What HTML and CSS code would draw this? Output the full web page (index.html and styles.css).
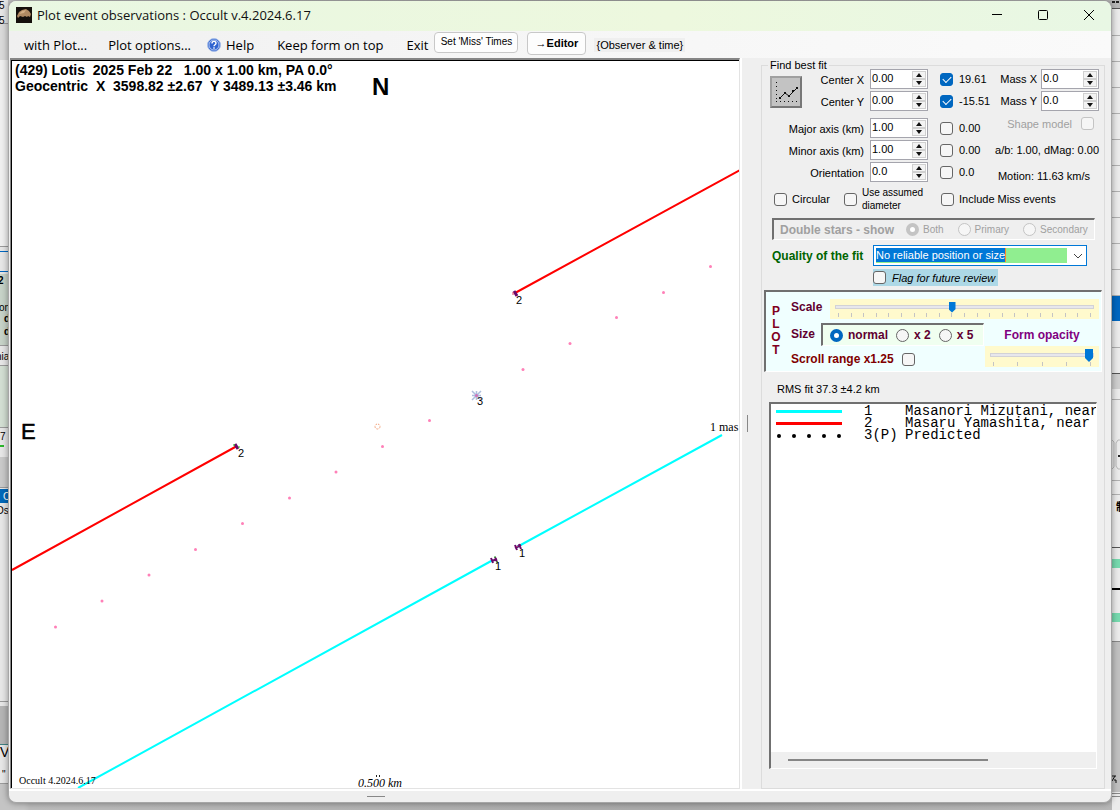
FILE: index.html
```html
<!DOCTYPE html>
<html lang="en">
<head>
<meta charset="utf-8">
<title>Plot event observations</title>
<link rel="stylesheet" href="styles.css">
</head>
<body>
<div class="desktop">
  <svg class="sliver sliver-left" width="8" height="810" viewBox="0 0 8 810" aria-hidden="true">
    <rect width="8" height="810" fill="#e6e6e6"/>
    <rect y="24" width="8" height="36" fill="#d9d9d9"/>
    <rect y="60" width="8" height="186" fill="#efefef"/>
    <path d="M0 23.500h8M0 246.500h8M0 345.500h8M0 365.500h8M0 427.500h8M0 487.500h8M0 701.500h8M0 783.500h8" stroke="#9a9a9a"/>
    <path d="M0 251.500h8M0 271.500h8" stroke="#0067c0"/>
    <rect y="274" width="8" height="71" fill="#c6d2c7"/>
    <rect y="366" width="8" height="61" fill="#d2ded2"/>
    <path d="M0 446h4" stroke="#2bb52b" stroke-width="2"/>
    <rect y="457" width="8" height="30" fill="#c9c9c9"/>
    <rect y="489" width="8" height="14" fill="#0067b8"/>
    <rect y="706" width="8" height="38" fill="#b4b4b4"/>
    <path d="M0 744.500h8" stroke="#3f8080"/>
    <rect y="784" width="8" height="26" fill="#c4c4c4"/>
    <g font-size="10">
      <text x="-1" y="9">5</text><text x="-1" y="24">5</text>
      <text x="-2" y="284" font-weight="bold">2</text>
      <text x="-1" y="311">on</text>
      <text x="4" y="322" font-weight="bold">d</text><text x="4" y="335" font-weight="bold">d</text>
      <text x="-4" y="360">nia</text><text x="0" y="440">7</text>
      <text x="3" y="500" fill="#fff">C</text><text x="-4" y="514">Os</text>
      <text x="0" y="757" font-size="14">V</text><text x="2" y="778">"</text>
    </g>
  </svg>
  <svg class="sliver sliver-right" width="8" height="810" viewBox="0 0 8 810" aria-hidden="true">
    <rect width="8" height="810" fill="#ebebeb"/>
    <rect width="8" height="8" fill="#b9b9b9"/>
    <path d="M0 2h8" stroke="#222" stroke-width="2" stroke-dasharray="3 1"/>
    <path d="M0 8.500h8M0 373.500h8M0 547.500h8" stroke="#555"/>
    <path d="M0 35.500h8M0 61.500h8M0 87.500h8M0 113.500h8M0 139.500h8M0 165.500h8M0 191.500h8M0 217.500h8M0 243.500h8M0 269.500h8M0 295.500h8M0 347.500h8M0 399.500h8M0 480.500h8M0 494.500h8" stroke="#b0b0b0"/>
    <rect y="296" width="8" height="25" fill="#0067c0"/>
    <rect y="374" width="8" height="15" fill="#cfcfcf"/>
    <path d="M8 440h-2l-2 3v23l2 3h2M0 440l2 2v25l-2 2" fill="none" stroke="#b8b8b8"/>
    <path d="M6 456h2" stroke="#222" stroke-width="2"/>
    <text x="4" y="511" font-size="11" font-weight="bold">制</text>
    <rect y="559" width="8" height="9" fill="#76d9ae"/>
    <path d="M0 589h8" stroke="#000" stroke-width="2"/>
    <rect y="613" width="8" height="9" fill="#76d9ae"/>
    <rect y="641" width="8" height="151" fill="#c0c0c0"/>
    <path d="M0 641.500h8M0 793.500h8M0 796.500h8" stroke="#888"/>
    <path d="M0 781l3-5M0 776h4M2 780h2v3" stroke="#111" fill="none"/>
  </svg>

  <main class="window">
    <header class="titlebar">
      <svg class="app-icon" width="16" height="16" viewBox="0 0 16 16" aria-hidden="true"><rect width="16" height="16" fill="#15100c"/><path d="M1 9l2-4 3-2 4-1 3 2 2 3-1 3-2-1-1 1-2-1-2 1-3-1-2 2z" fill="#b08a62"/><path d="M3 7l3-3 4-1-2 3z" fill="#d2ae84"/></svg>
      <h1 class="title">Plot event observations : Occult v.4.2024.6.17</h1>
      <button class="caption-btn" aria-label="Minimize"><svg width="12" height="12" viewBox="0 0 12 12"><path d="M1 5.500h10" stroke="#000"/></svg></button>
      <button class="caption-btn" aria-label="Maximize"><svg width="12" height="12" viewBox="0 0 12 12"><rect x="1.500" y="1.500" width="9" height="9" rx="1" fill="none" stroke="#000"/></svg></button>
      <button class="caption-btn" aria-label="Close"><svg width="12" height="12" viewBox="0 0 12 12"><path d="M1 1l10 10M11 1L1 11" stroke="#000" fill="none"/></svg></button>
    </header>

    <nav class="menubar">
      <button class="menu">with Plot...</button>
      <button class="menu">Plot options...</button>
      <button class="menu menu-help"><svg width="14" height="14" viewBox="0 0 14 14" aria-hidden="true"><circle cx="7" cy="7" r="6.500" fill="#2f63d0" stroke="#a9bfe8"/><circle cx="7" cy="7" r="5" fill="none" stroke="#e6eefc" stroke-width=".7"/><path d="M5 5.500c0-3 4-2.700 4-.3C9 6.700 7 6.700 7 8.300M7 9.300v1.500" stroke="#fff" stroke-width="1.400" fill="none"/></svg>Help</button>
      <button class="menu menu-late">Keep form on top</button>
      <button class="menu">Exit</button>
      <button class="tool tool-miss">Set 'Miss' Times</button>
      <button class="tool tool-editor">→Editor</button>
      <button class="observer">{Observer &amp; time}</button>
    </nav>

    <div class="content">
      <section class="plot">
        <svg class="plot-canvas" viewBox="0 0 727 727" role="img" aria-label="Event chords">
          <g class="plot-heading">
            <text x="3" y="14">(429) Lotis  2025 Feb 22   1.00 x 1.00 km, PA 0.0°</text>
            <text x="3" y="30">Geocentric  X  3598.82 ±2.67  Y 3489.13 ±3.46 km</text>
          </g>
          <text class="north" x="360" y="34">N</text>
          <text class="east" x="9" y="378">E</text>
          <g class="chord red"><path d="M503 232L728 109M0 509L225 385"/></g>
          <g class="chord cyan"><path d="M505 486L710 374M481 499L66 727"/></g>
          <g class="path-dots">
            <circle cx="698.500" cy="205.500" r="1.500"/><circle cx="651.500" cy="231.500" r="1.500"/><circle cx="604.500" cy="256.500" r="1.500"/><circle cx="558" cy="282.500" r="1.500"/><circle cx="511" cy="308.500" r="1.500"/><circle cx="417.500" cy="359.500" r="1.500"/><circle cx="370.500" cy="385.500" r="1.500"/><circle cx="324" cy="411" r="1.500"/><circle cx="277.500" cy="437" r="1.500"/><circle cx="230.500" cy="462.500" r="1.500"/><circle cx="183.500" cy="488.500" r="1.500"/><circle cx="137" cy="514" r="1.500"/><circle cx="90" cy="540" r="1.500"/><circle cx="43.500" cy="566" r="1.500"/>
          </g>
          <path d="M460 330l9 9M469 330l-9 9M464.500 330v9M460 334.500h9" stroke="#9aaed6" stroke-width="1.500" opacity=".8"/>
          <circle cx="464.500" cy="334.500" r="1.500" fill="#d070b8"/>
          <circle cx="365.500" cy="365.500" r="2.500" fill="none" stroke="#f4a27a" stroke-dasharray="2 1"/>
          <g class="ends">
            <path d="M502 230l3 5M223 383l3 5" stroke-width="3"/>
            <path d="M501 231v3" stroke="#e04060"/>
            <path d="M222 383v2M227 385v2" stroke="#20c020"/>
            <path d="M503 484l2 5M507 483l2 5M503 487l6-3M479 497l2 5M483 496l2 5M480 500l5-2" stroke-width="2"/>
            <path d="M505 485v1" stroke="#f06080"/><path d="M482 496h2M484 501h2" stroke="#20b020"/>
          </g>
          <g class="point-label">
            <text x="504" y="243">2</text><text x="226" y="396">2</text><text x="465" y="344">3</text><text x="507" y="496">1</text><text x="483" y="509">1</text>
          </g>
          <g class="serif">
            <text x="698" y="370" font-size="12">1 mas</text>
            <text x="7" y="723" font-size="10">Occult 4.2024.6.17</text>
            <text x="346" y="726" font-size="12" font-style="italic">0.500 km</text>
          </g>
          <path d="M364.500 714v2M367.500 714v2" stroke="#222"/>
        </svg>
      </section>
      <div class="splitter"><span class="grip"></span></div>

      <fieldset class="fit">
        <legend>Find best fit</legend>
        <div class="params">
          <button class="chart-btn" aria-label="Fit"><svg width="24" height="24" viewBox="0 0 24 24"><path d="M2.500 2v19M2 21.500h22" stroke="#111" stroke-dasharray="1 3" fill="none"/><path d="M6 18l5-5 4 3 8-8" stroke="#111" fill="none"/><path d="M5 17h2v2H5zM10 12h2v2h-2zM14 15h2v2h-2zM18 10h2v2h-2zM22 7h2v2h-2z" fill="#111"/></svg></button>

          <label class="name" for="cx">Center X</label>
          <span class="spin"><input id="cx" value="0.00"><span class="updown"><button class="up" aria-label="Up"></button><button class="down" aria-label="Down"></button></span></span>
          <label class="tick"><input type="checkbox" checked>19.61</label>
          <div class="mass"><label for="mx">Mass X</label><span class="spin"><input id="mx" value="0.0"><span class="updown"><button class="up" aria-label="Up"></button><button class="down" aria-label="Down"></button></span></span></div>

          <label class="name" for="cy">Center Y</label>
          <span class="spin"><input id="cy" value="0.00"><span class="updown"><button class="up" aria-label="Up"></button><button class="down" aria-label="Down"></button></span></span>
          <label class="tick"><input type="checkbox" checked>-15.51</label>
          <div class="mass"><label for="my">Mass Y</label><span class="spin"><input id="my" value="0.0"><span class="updown"><button class="up" aria-label="Up"></button><button class="down" aria-label="Down"></button></span></span></div>
        </div>
        <div class="params params-axes">
          <label class="name wide" for="maj">Major axis (km)</label>
          <span class="spin"><input id="maj" value="1.00"><span class="updown"><button class="up" aria-label="Up"></button><button class="down" aria-label="Down"></button></span></span>
          <label class="tick"><input type="checkbox">0.00</label>
          <div class="facts">
            <label class="shape">Shape model<input type="checkbox" disabled></label>
            <span>a/b: 1.00, dMag: 0.00</span>
            <span class="motion">Motion: 11.63 km/s</span>
          </div>
          <label class="name wide" for="min">Minor axis (km)</label>
          <span class="spin"><input id="min" value="1.00"><span class="updown"><button class="up" aria-label="Up"></button><button class="down" aria-label="Down"></button></span></span>
          <label class="tick"><input type="checkbox">0.00</label>
          <label class="name wide" for="ori">Orientation</label>
          <span class="spin"><input id="ori" value="0.0"><span class="updown"><button class="up" aria-label="Up"></button><button class="down" aria-label="Down"></button></span></span>
          <label class="tick"><input type="checkbox">0.0</label>
        </div>

        <div class="options">
          <label class="opt"><input type="checkbox">Circular</label>
          <label class="opt opt-two"><input type="checkbox"><span>Use assumed<br>diameter</span></label>
          <label class="opt"><input type="checkbox">Include Miss events</label>
        </div>

        <div class="double sunken">
          <strong>Double stars - show</strong>
          <label><input type="radio" name="dbl" checked disabled>Both</label>
          <label><input type="radio" name="dbl" disabled>Primary</label>
          <label><input type="radio" name="dbl" disabled>Secondary</label>
        </div>

        <div class="quality">
          <label class="quality-label" for="quality">Quality of the fit</label>
          <div class="combo">
            <select id="quality"><option>No reliable position or size</option></select>
            <svg class="chevron" width="10" height="6" viewBox="0 0 10 6" aria-hidden="true"><path d="M1 1l4 4 4-4" fill="none" stroke="#444"/></svg>
          </div>
          <label class="flag"><input type="checkbox">Flag for future review</label>
        </div>

        <div class="plot-opts sunken">
          <div class="vertical"><span>P</span><span>L</span><span>O</span><span>T</span></div>
          <div class="scale-row">
            <label for="scale">Scale</label>
            <div class="slider"><input id="scale" type="range" min="0" max="20" value="9"><div class="ticks"><i></i><i></i><i></i><i></i><i></i><i></i><i></i><i></i><i></i><i></i><i></i><i></i><i></i><i></i><i></i><i></i><i></i><i></i><i></i><i></i><i></i></div></div>
          </div>
          <div class="lower-left">
            <div class="size-row">
              <span>Size</span>
              <div class="sizes sunken">
                <label><input type="radio" name="size" checked>normal</label>
                <label><input type="radio" name="size">x 2</label>
                <label><input type="radio" name="size">x 5</label>
              </div>
            </div>
            <label class="scroll-row">Scroll range x1.25<input type="checkbox"></label>
          </div>
          <div class="lower-right">
            <label for="opacity">Form opacity</label>
            <div class="slider slider-opacity"><input id="opacity" type="range" min="0" max="4" value="4"><div class="ticks"><i></i><i></i><i></i><i></i><i></i></div></div>
          </div>
        </div>

        <p class="rms">RMS fit 37.3 ±4.2 km</p>

        <div class="list sunken">
          <ul class="rows">
            <li><svg width="66" height="12" viewBox="0 0 66 12"><path d="M0 6.500h66" stroke="#0ff" stroke-width="3"/></svg><span class="num">1</span><span>Masanori Mizutani, near</span></li>
            <li><svg width="66" height="12" viewBox="0 0 66 12"><path d="M0 6.500h66" stroke="#f00" stroke-width="3"/></svg><span class="num">2</span><span>Masaru Yamashita, near</span></li>
            <li><svg width="66" height="12" viewBox="0 0 66 12"><g fill="#000"><circle cx="3" cy="7" r="2"/><circle cx="18" cy="7" r="2"/><circle cx="33" cy="7" r="2"/><circle cx="48" cy="7" r="2"/><circle cx="63" cy="7" r="2"/></g></svg><span class="num">3(P)</span><span>Predicted</span></li>
          </ul>
          <div class="hscroll"><div class="hthumb"></div></div>
        </div>
      </fieldset>
    </div>
    <footer class="bottom"><span class="grip grip-h"></span></footer>
  </main>
</div>
</body>
</html>
```
FILE: styles.css
```css
* { box-sizing: border-box; }
body { margin: 0; font: 11px/14px "Liberation Sans", "Noto Sans CJK JP", sans-serif; color: #000; }
button, input, select { font: inherit; color: inherit; margin: 0; padding: 0; }
button { border: 0; background: none; }

.desktop {
  position: relative;
  display: flex;
  min-height: 100vh;
  padding: 1px 8px 8px;
  background: linear-gradient(90deg, #c4c4c4 0 24px, #bbb 30px, #aaa 60%, #b8b8b8);
}
.sliver { position: absolute; top: 0; overflow: hidden; }
.sliver-left { left: 0; }
.sliver-right { right: 0; }

.window {
  position: relative;
  flex: 1;
  display: flex;
  flex-direction: column;
  min-width: 0;
  border: 1px solid #a6a6a6;
  border-top: 0;
  border-radius: 8px;
  overflow: hidden;
  background: #efefef;
  box-shadow: 0 0 6px rgba(0, 0, 0, .4);
}

.titlebar {
  display: flex;
  align-items: center;
  height: 30px;
  padding: 0 0 2px 7px;
  background: linear-gradient(90deg, #e9f7e2, #edf8de 60%, #e8f7e4);
}
.title { flex: 1; margin: 0 0 0 5px; font: 13px/20px "Open Sans", sans-serif; color: #111; }
.caption-btn { display: grid; place-items: center; width: 46px; height: 28px; padding-left: 2px; }

.menubar {
  display: flex;
  align-items: center;
  height: 27px;
  padding-left: 15px;
  background: linear-gradient(90deg, #f0f0f0, #f6f6f6 50%, #fafafa);
}
.menu { margin-right: 21px; font: 13px/20px "Open Sans", sans-serif; white-space: nowrap; }
.menu-help { display: flex; align-items: center; gap: 5px; margin-left: -5px; margin-right: 23px; }
.menu-late { margin-right: 23px; }
.tool { border: 1px solid #c8c8c8; border-radius: 4px; background: #fdfdfd; white-space: nowrap; }
.tool-miss { width: 84px; height: 21px; margin: 0 9px 5px -15px; font-size: 10px; }
.tool-editor { width: 59px; height: 23px; margin: 0 8px 3px 0; font-weight: bold; }
.observer { padding: 0 2px; background: #efefef; white-space: nowrap; }

.content { flex: 1; display: flex; min-height: 0; }
.plot {
  flex: 1;
  display: flex;
  min-width: 0;
  margin-left: 1px;
  padding: 1px 0 0 1px;
  background: #fff;
  border: solid;
  border-width: 2px 1px 1px 1px;
  border-color: #868686 #e3e3e3 #e3e3e3 #868686;
  box-shadow: inset 1px 1px #000;
}
.plot-canvas { flex: 1; width: 100%; min-width: 0; }
.plot-canvas text { white-space: pre; }
.plot-heading { font-size: 14px; font-weight: bold; }
.north { font-size: 24px; font-weight: bold; }
.east { font-size: 22px; stroke: #000; stroke-width: .5px; }
.chord path { stroke-width: 2; fill: none; }
.red path { stroke: #f00; }
.cyan path { stroke: #0ff; }
.path-dots { fill: #ff80b8; }
.ends path { fill: none; }
.ends { stroke: #6a0a6a; }
.point-label { font-size: 11px; }
.serif { font-family: "Liberation Serif", serif; }

.splitter { display: flex; align-items: center; width: 21px; padding-left: 5px; border-left: 2px solid #fff; }
.grip { width: 1px; height: 17px; background: #888; }
.grip-h { width: 18px; height: 1px; }
.bottom { display: flex; align-items: center; height: 13px; padding-left: 358px; border-top: 2px solid #fff; }

.fit {
  display: flex;
  flex-direction: column;
  width: 344px;
  min-width: 0;
  margin: 0 6px 0 0;
  padding: 0 4px 19px 8px;
  border: 1px solid #dcdcdc;
}
.fit legend { padding: 0 2px; margin-left: -2px; }

.sunken { border: solid; border-width: 2px 1px 1px 2px; border-color: #707070 #fff #fff #707070; }

.params {
  display: grid;
  grid-template-columns: 32px 56px 58px 56px 103px;
  grid-auto-rows: 22px;
  column-gap: 6px;
  align-items: center;
  margin-top: -4px;
}
.params-axes { margin-top: 5px; }
.chart-btn {
  grid-row: span 2;
  display: grid;
  place-items: center;
  width: 32px;
  height: 32px;
  margin-top: 4px;
  background: #c3c3c3;
  border: 2px solid;
  border-color: #a0a0a0 #777 #777 #a0a0a0;
}
.name { text-align: right; white-space: nowrap; padding-top: 2px; }
.wide { grid-column: 1 / 3; }
.spin { display: flex; width: 58px; height: 20px; background: #fff; border: 1px solid #a5a5ad; padding: 1px; }
.spin input { flex: 1; min-width: 0; width: 100%; padding: 0 0 2px; border: 0; background: none; }
.updown { display: flex; flex-direction: column; width: 14px; }
.updown button { flex: 1; display: grid; place-items: center; background: #f3f3f3; border: 1px solid #d0d0d0; }
.updown button::before { content: ""; border: 3px solid transparent; border-top: 0; border-bottom: 4px solid #111; }
.updown .down::before { border-bottom: 0; border-top: 4px solid #111; }
.tick { display: flex; align-items: center; gap: 6px; padding-left: 6px; white-space: nowrap; }
.mass { display: flex; align-items: center; justify-content: flex-end; gap: 4px; white-space: nowrap; }
.facts { grid-row: span 3; align-self: stretch; display: flex; flex-direction: column; justify-content: space-between; align-items: flex-end; white-space: nowrap; }
.shape { display: flex; gap: 9px; margin-right: 5px; color: #a0a0a0; }
.motion { margin-right: 9px; }

input[type="checkbox"], input[type="radio"] {
  appearance: none;
  flex: none;
  display: grid;
  place-items: center;
  width: 13px;
  height: 13px;
  border: 1px solid #666;
  border-radius: 3px;
  background: #f6f6f6;
}
input[type="radio"] { border-radius: 50%; }
input[type="checkbox"]:checked { background: #0067c0; border-color: #0067c0; }
input[type="checkbox"]:checked::before { content: ""; width: 7px; height: 4px; border: solid #fff; border-width: 0 0 1px 1px; transform: rotate(-45deg); margin-bottom: 2px; }
input[type="radio"]:checked { border: 4px solid #0067c0; background: #fff; }
input[type]:disabled { border-color: #c4c4c4; }

.options { display: flex; align-items: center; height: 26px; margin: 3px 0 0 4px; }
.opt { display: flex; align-items: center; gap: 5px; margin-right: 14px; white-space: nowrap; }
.opt-two { margin-right: 18px; font-size: 10px; line-height: 13px; }

.double { display: flex; align-items: center; height: 22px; margin: 6px 5px 0 2px; padding-left: 6px; color: #a0a0a0; white-space: nowrap; font-size: 10px; }
.double strong { font-size: 12px; margin-right: 12px; }
.double label { display: flex; align-items: center; gap: 4px; margin-right: 14px; }

.quality { display: grid; grid-template-columns: 95px 214px; column-gap: 6px; align-items: center; margin: 5px 0 0 2px; }
.quality-label { font-size: 12px; font-weight: bold; color: #006400; white-space: nowrap; }
.combo { position: relative; }
.combo select {
  display: block;
  width: 100%;
  height: 21px;
  padding: 0 20px 2px 2px;
  appearance: none;
  border: 1px solid #0078d7;
  outline: 0;
  color: #fff;
  background:
    linear-gradient(#0078d7, #0078d7) 2px 2px / 129px 14px no-repeat,
    linear-gradient(#ff8728, #ff8728) 131px 2px / 1px 14px no-repeat,
    linear-gradient(#90ee90, #90ee90) 2px 2px / 191px 15px no-repeat,
    #fff;
}
.chevron { position: absolute; right: 4px; top: 8px; pointer-events: none; }
.flag { grid-column: 2; justify-self: start; display: flex; align-items: center; gap: 6px; width: 125px; height: 17px; margin-top: 3px; background: #add8e6; font-style: italic; white-space: nowrap; }

.plot-opts {
  display: grid;
  grid-template-columns: 14px 196px 1fr;
  grid-template-rows: 29px auto;
  column-gap: 8px;
  height: 82px;
  margin: 4px -2px 0 -6px;
  padding: 0 3px;
  background: #f0ffff;
  color: #600030;
  font-size: 12px;
  font-weight: bold;
}
.vertical { grid-row: span 2; display: flex; flex-direction: column; align-items: center; line-height: 13px; padding-top: 13px; color: #800020; }
.scale-row { grid-column: 2 / 4; display: flex; align-items: center; justify-content: space-between; }
.slider { width: 269px; height: 20px; margin-top: 4px; padding: 2px 5px 0; background: #fffacd; }
.slider input { display: block; width: 100%; height: 12px; appearance: none; background: none; }
.slider input::-webkit-slider-runnable-track { height: 4px; background: #e7e7ec; border: 1px solid #d2d2d6; }
.slider input::-webkit-slider-thumb { appearance: none; width: 7px; height: 11px; margin-top: -4px; background: #0078d7; clip-path: polygon(0 0, 100% 0, 100% 70%, 50% 100%, 0 70%); }
.ticks { display: flex; justify-content: space-between; padding: 0 3px; }
.ticks i { width: 1px; height: 4px; background: #c4c4c4; }
.size-row { display: flex; align-items: center; gap: 6px; white-space: nowrap; }
.sizes { display: flex; align-items: center; height: 23px; width: 163px; margin-top: 2px; padding-left: 7px; background: #f0fff0; }
.sizes label { display: flex; align-items: center; gap: 5px; margin-right: 8px; }
.scroll-row { display: flex; align-items: center; gap: 8px; margin-top: 6px; color: #800000; white-space: nowrap; }
.lower-right { display: flex; flex-direction: column; align-items: center; margin-left: -10px; padding-top: 7px; color: #800080; }
.slider-opacity { align-self: flex-end; width: 114px; height: 21px; }
.slider-opacity input { height: 14px; }
.slider-opacity input::-webkit-slider-thumb { width: 8px; height: 13px; margin-top: -5px; }

.rms { margin: 10px 0 6px 7px; }

.list { flex: 1; display: flex; flex-direction: column; min-height: 0; margin: 0 3px 0 -1px; background: #fff; overflow: hidden; }
.rows { flex: 1; margin: 0; padding: 1px 0 0 5px; list-style: none; font: 14px/12px "Liberation Mono", monospace; overflow: hidden; }
.rows li { display: flex; align-items: center; height: 12px; white-space: nowrap; }
.rows svg { flex: none; }
.num { flex: none; width: 41px; margin-left: 22px; }
.hscroll { display: flex; align-items: center; height: 16px; padding-left: 17px; background: #efefef; }
.hthumb { width: 65%; height: 2px; background: #868686; }
```
